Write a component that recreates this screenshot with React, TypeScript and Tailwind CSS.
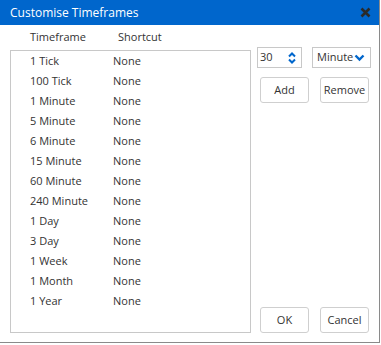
import React from "react";

const rows = [
  "1 Tick",
  "100 Tick",
  "1 Minute",
  "5 Minute",
  "6 Minute",
  "15 Minute",
  "60 Minute",
  "240 Minute",
  "1 Day",
  "3 Day",
  "1 Week",
  "1 Month",
  "1 Year",
];

function Btn({ label }: { label: string }) {
  return (
    <button className="w-[49px] h-[26px] border border-[#cfcfcf] rounded-[3px] bg-white text-[11px] text-[#333] flex items-center justify-center">
      {label}
    </button>
  );
}

export default function App() {
  return (
    <div
      className="w-[381px] h-[345px] bg-white flex flex-col"
      style={{ fontFamily: '"Open Sans", sans-serif' }}
    >
      <div className="w-[380px] h-[343px] border-r border-b border-[#8a8a8a] flex flex-col">
        <div className="h-[25px] bg-[#0066cc] flex items-center justify-between pl-[10px] pr-[8px]">
          <span className="text-white text-[12px] leading-none">Customise Timeframes</span>
          <svg width="11" height="11" viewBox="0 0 11 11">
            <path d="M1.5 1.5 L9.5 9.5 M9.5 1.5 L1.5 9.5" stroke="#2a2a2a" strokeWidth="2.6" strokeLinecap="butt" />
          </svg>
        </div>
        <div className="flex-1 flex pl-[10px]">
          <div className="flex flex-col w-[241px]">
            <div className="h-[25px] flex items-center text-[11px] text-[#333]">
              <span className="pl-[20px] w-[108px]">Timeframe</span>
              <span>Shortcut</span>
            </div>
            <div className="w-[241px] h-[283px] border border-[#c8c8c8]">
              {rows.map((r) => (
                <div key={r} className="h-[20px] flex items-center text-[11px] text-[#333]">
                  <span className="pl-[19px] w-[102px]">{r}</span>
                  <span>None</span>
                </div>
              ))}
            </div>
          </div>
          <div className="flex flex-col pl-[6px] pt-[22px] pb-[9px]">
            <div className="flex gap-[10px]">
              <div className="w-[45px] h-[21px] border border-[#c8c8c8] flex items-center justify-between pl-[2px] pr-[5px] text-[11px] text-[#333]">
                <span>30</span>
                <svg width="8" height="12" viewBox="0 0 8 12">
                  <path d="M1 4.5 L4 1.5 L7 4.5 M1 7.5 L4 10.5 L7 7.5" stroke="#0066cc" strokeWidth="2" fill="none" />
                </svg>
              </div>
              <div className="w-[59px] h-[21px] border border-[#c8c8c8] flex items-center pl-[4px] text-[11px] text-[#333]">
                <span>Minute</span>
                <svg width="11" height="8" viewBox="0 0 11 8" className="ml-[1px]">
                  <path d="M1.5 1.5 L5.5 5.5 L9.5 1.5" stroke="#0066cc" strokeWidth="2.4" fill="none" />
                </svg>
              </div>
            </div>
            <div className="flex gap-[11px] pl-[3px] mt-[9px]">
              <Btn label="Add" />
              <Btn label="Remove" />
            </div>
            <div className="flex-1" />
            <div className="flex gap-[11px] pl-[3px]">
              <Btn label="OK" />
              <Btn label="Cancel" />
            </div>
          </div>
        </div>
      </div>
    </div>
  );
}
